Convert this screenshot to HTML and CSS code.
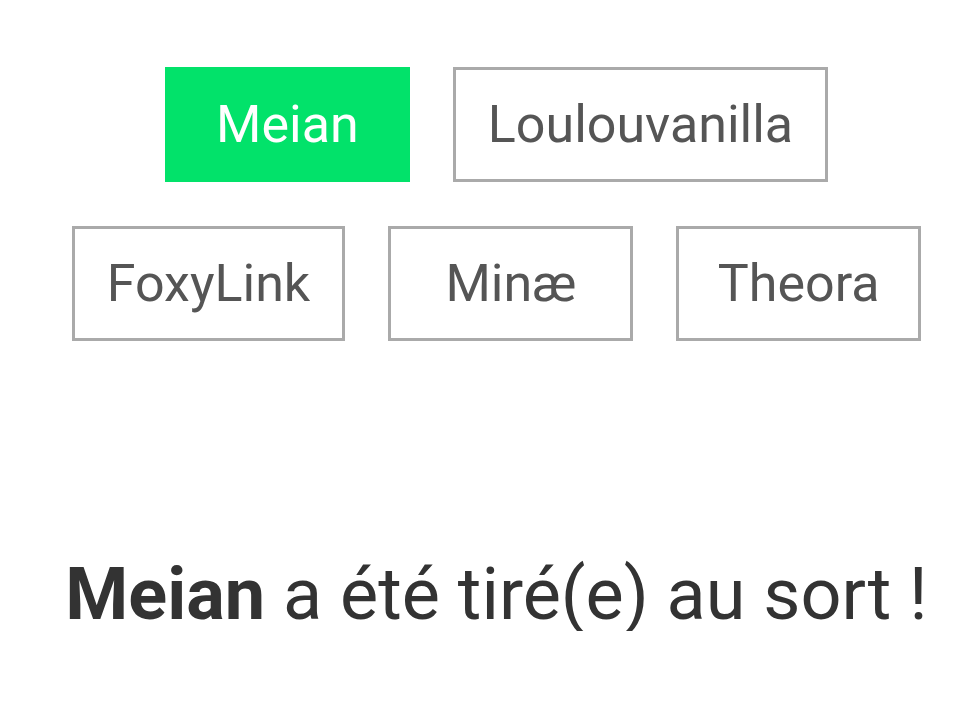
FILE: index.html
```html
<!DOCTYPE html>
<html lang="fr">
<head>
<meta charset="utf-8">
<title>Tirage au sort</title>
<link rel="stylesheet" href="styles.css">
</head>
<body>
<main class="page">
  <ul class="names">
    <li class="name name--picked">Meian</li>
    <li class="name">Loulouvanilla</li>
    <li class="name">FoxyLink</li>
    <li class="name">Minæ</li>
    <li class="name">Theora</li>
  </ul>
  <p class="result"><strong>Meian</strong> a été tiré(e) au sort !</p>
</main>
</body>
</html>
```
FILE: styles.css
```css
* { box-sizing: border-box; }
html, body { margin: 0; padding: 0; background: #fff; }
body {
  font-family: Roboto, "Noto Sans", sans-serif;
  color: #333;
}
.page {
  padding: 45px 0 0 18px;
  width: 975px;
}
.names {
  list-style: none;
  margin: 0 auto;
  padding: 0;
  width: 900px;
  display: flex;
  flex-wrap: wrap;
  justify-content: center;
}
.name {
  margin: 22px 21.5px;
  min-width: 245px;
  height: 115px;
  padding: 0 32px;
  border: 3px solid #aaa;
  display: flex;
  align-items: center;
  justify-content: center;
  font-size: 52px;
  color: #555;
}
.name--picked {
  background: #02e26a;
  border-color: #02e26a;
  color: #fff;
}
.result {
  margin: 196px 0 0;
  text-align: center;
  font-size: 72px;
  color: #333;
  line-height: 1;
}
.result strong { font-weight: 700; }
```
